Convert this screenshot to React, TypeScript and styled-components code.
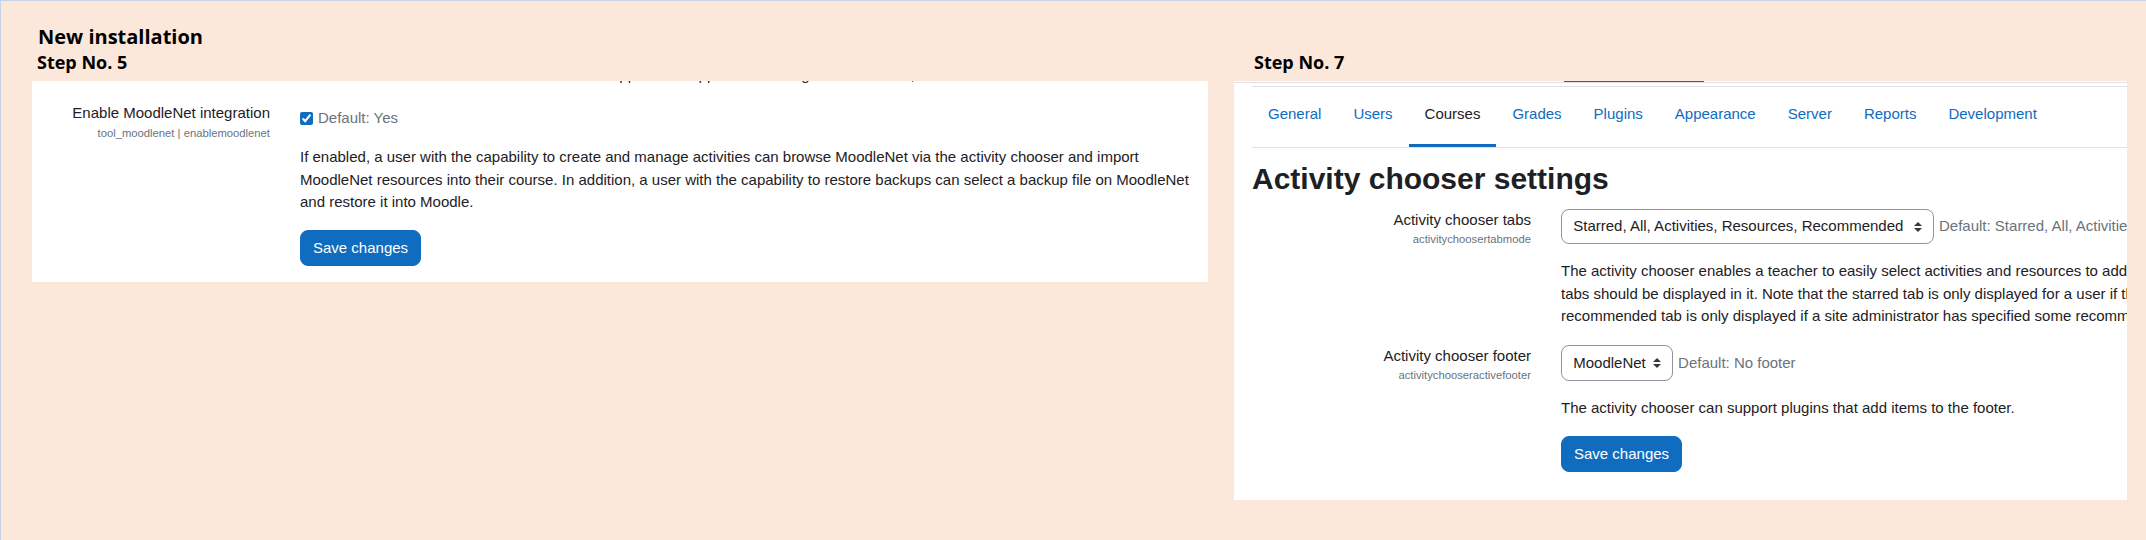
import React from 'react';
import styled, { createGlobalStyle } from 'styled-components';

const GlobalStyle = createGlobalStyle`
  html, body {
    margin: 0;
    padding: 0;
  }
  body {
    width: 2146px;
    height: 540px;
    box-sizing: border-box;
    background: #fce8da;
    border-top: 1px solid #c6d3e8;
    border-left: 1px solid #c6d3e8;
    overflow: hidden;
  }
`;

const Page = styled.div`
  padding: 23px 0 0 31px;
  font-family: 'Liberation Sans', Arial, sans-serif;
`;

const Title = styled.h1`
  margin: 0 0 0 6px;
  font-family: 'Open Sans', 'Noto Sans', sans-serif;
  font-weight: 700;
  font-size: 20px;
  line-height: 25px;
  color: #000;
`;

const Columns = styled.div`
  display: flex;
  align-items: flex-start;
  gap: 26px;
`;

const Column = styled.section<{ $width: number }>`
  flex: none;
  width: ${p => p.$width}px;
`;

const StepTitle = styled.h2<{ $indent: number }>`
  margin: 2px 0 7.65px ${p => p.$indent}px;
  font-family: 'Open Sans', 'Noto Sans', sans-serif;
  font-weight: 700;
  font-size: 18px;
  line-height: 22px;
  color: #000;
`;

const Panel = styled.div<{ $padBottom: number }>`
  background: #fff;
  overflow: hidden;
  color: #1d2125;
  font-size: 15px;
  line-height: 22.5px;
  padding-bottom: ${p => p.$padBottom}px;
`;

/* tail of the previous setting's text, cut off by the screenshot */
const ClippedLine = styled.div`
  height: 4px;
  overflow: hidden;
  padding-left: 268px;
  white-space: nowrap;

  span {
    display: block;
    margin-top: -16.2px;
  }
`;

const SettingRow = styled.div<{ $label: number; $content: number; $top: number; $indent?: number }>`
  display: grid;
  grid-template-columns: ${p => p.$label}px ${p => p.$content}px;
  column-gap: 30px;
  margin: ${p => p.$top}px 0 0 ${p => p.$indent ?? 0}px;
`;

const LabelCell = styled.div`
  text-align: right;
`;

const LabelText = styled.div`
  font-size: 15px;
  line-height: 22.5px;
  color: #1d2125;
`;

const ShortName = styled.div`
  font-size: 11.25px;
  line-height: 1.5;
  color: #6a737b;
`;

const ContentCell = styled.div<{ $nowrap?: boolean }>`
  white-space: ${p => (p.$nowrap ? 'nowrap' : 'normal')};
`;

const CheckLine = styled.label`
  display: flex;
  align-items: center;
  margin-top: 5px;

  input {
    width: 13px;
    height: 13px;
    margin: 0 5px 0 0;
    accent-color: #0f6cbf;
  }
`;

const DefaultInfo = styled.span<{ $gap?: number }>`
  margin-left: ${p => p.$gap ?? 0}px;
  color: #6a737b;
`;

const Description = styled.p<{ $top: number }>`
  margin: ${p => p.$top}px 0 0;
  color: #1d2125;
`;

const SaveButton = styled.button<{ $top: number }>`
  display: block;
  margin-top: ${p => p.$top}px;
  padding: 6px 12px;
  border: 1px solid #0f6cbf;
  border-radius: 8px;
  background: #0f6cbf;
  color: #fff;
  font-family: 'Liberation Sans', Arial, sans-serif;
  font-size: 15px;
  line-height: 22.5px;
  cursor: pointer;
`;

const TopRule = styled.div`
  height: 1px;
  border-bottom: 1px solid #dee2e6;
  display: flex;
`;

const ActiveMark = styled.div`
  margin-left: 330px;
  width: 140px;
  height: 1px;
  background: #0f6cbf;
`;

const TabNav = styled.nav`
  display: flex;
  margin: 3px 0 0 18px;
  border-top: 1px solid #dee2e6;
  border-bottom: 1px solid #dee2e6;
`;

const Tab = styled.a<{ $active?: boolean }>`
  display: flex;
  align-items: center;
  box-sizing: border-box;
  height: 60px;
  padding: 0 16px 4px;
  color: ${p => (p.$active ? '#1d2125' : '#0f6cbf')};
  text-decoration: none;
  white-space: nowrap;
  box-shadow: ${p => (p.$active ? 'inset 0 -3px 0 #0f6cbf' : 'none')};
`;

const PageHeading = styled.h2`
  margin: 13.3px 0 0 18px;
  font-size: 30px;
  line-height: 36px;
  font-weight: 700;
  color: #1d2125;
  white-space: nowrap;
`;

const SelectLine = styled.div`
  display: flex;
  align-items: center;
`;

const SelectBox = styled.div<{ $width?: number }>`
  display: inline-flex;
  align-items: center;
  justify-content: space-between;
  box-sizing: border-box;
  width: ${p => (p.$width ? `${p.$width}px` : 'auto')};
  height: 35.75px;
  padding: 0 11.25px;
  border: 1px solid #8f959e;
  border-radius: 8px;
  color: #1d2125;
  background: #fff;

  svg {
    flex: none;
    margin-left: 7px;
  }
`;

const Caret = () => (
  <svg width="8" height="10" viewBox="0 0 4 5">
    <path d="M2 0L0 2h4zm0 5L0 3h4z" fill="#343a40" />
  </svg>
);

const tabs = ['General', 'Users', 'Courses', 'Grades', 'Plugins', 'Appearance', 'Server', 'Reports', 'Development'];

export default function App() {
  return (
    <>
      <GlobalStyle />
      <Page>
        <Title>New installation</Title>
        <Columns>
          <Column $width={1176}>
            <StepTitle $indent={5}>Step No. 5</StepTitle>
            <Panel $padBottom={15.5}>
              <ClippedLine>
                <span>Once this is enabled then the MoodleNet tool supports the approach of using this on the site,</span>
              </ClippedLine>
              <SettingRow $label={238} $content={900} $top={17.75}>
                <LabelCell>
                  <LabelText>Enable MoodleNet integration</LabelText>
                  <ShortName>tool_moodlenet | enablemoodlenet</ShortName>
                </LabelCell>
                <ContentCell>
                  <CheckLine>
                    <input type="checkbox" defaultChecked />
                    <DefaultInfo>Default: Yes</DefaultInfo>
                  </CheckLine>
                  <Description $top={16.5}>
                    If enabled, a user with the capability to create and manage activities can browse MoodleNet via the
                    activity chooser and import MoodleNet resources into their course. In addition, a user with the
                    capability to restore backups can select a backup file on MoodleNet and restore it into Moodle.
                  </Description>
                  <SaveButton $top={15.75}>Save changes</SaveButton>
                </ContentCell>
              </SettingRow>
            </Panel>
          </Column>

          <Column $width={893}>
            <StepTitle $indent={20}>Step No. 7</StepTitle>
            <Panel $padBottom={27.5}>
              <TopRule>
                <ActiveMark />
              </TopRule>
              <TabNav>
                {tabs.map(t => (
                  <Tab key={t} $active={t === 'Courses'}>
                    {t}
                  </Tab>
                ))}
              </TabNav>
              <PageHeading>Activity chooser settings</PageHeading>

              <SettingRow $label={279} $content={1100} $top={11.7} $indent={18}>
                <LabelCell>
                  <LabelText>Activity chooser tabs</LabelText>
                  <ShortName>activitychoosertabmode</ShortName>
                </LabelCell>
                <ContentCell $nowrap>
                  <SelectLine>
                    <SelectBox $width={373}>
                      Starred, All, Activities, Resources, Recommended
                      <Caret />
                    </SelectBox>
                    <DefaultInfo $gap={5}>Default: Starred, All, Activities, Resources, Recommended</DefaultInfo>
                  </SelectLine>
                  <Description $top={16}>
                    The activity chooser enables a teacher to easily select activities and resources to add to their
                    course. This setting determines which
                    <br />
                    tabs should be displayed in it. Note that the starred tab is only displayed for a user if they have
                    starred one or more activities and the
                    <br />
                    recommended tab is only displayed if a site administrator has specified some recommended activities.
                  </Description>
                </ContentCell>
              </SettingRow>

              <SettingRow $label={279} $content={1100} $top={17} $indent={18}>
                <LabelCell>
                  <LabelText>Activity chooser footer</LabelText>
                  <ShortName>activitychooseractivefooter</ShortName>
                </LabelCell>
                <ContentCell $nowrap>
                  <SelectLine>
                    <SelectBox>
                      MoodleNet
                      <Caret />
                    </SelectBox>
                    <DefaultInfo $gap={5}>Default: No footer</DefaultInfo>
                  </SelectLine>
                  <Description $top={16}>
                    The activity chooser can support plugins that add items to the footer.
                  </Description>
                  <SaveButton $top={16.75}>Save changes</SaveButton>
                </ContentCell>
              </SettingRow>
            </Panel>
          </Column>
        </Columns>
      </Page>
    </>
  );
}
